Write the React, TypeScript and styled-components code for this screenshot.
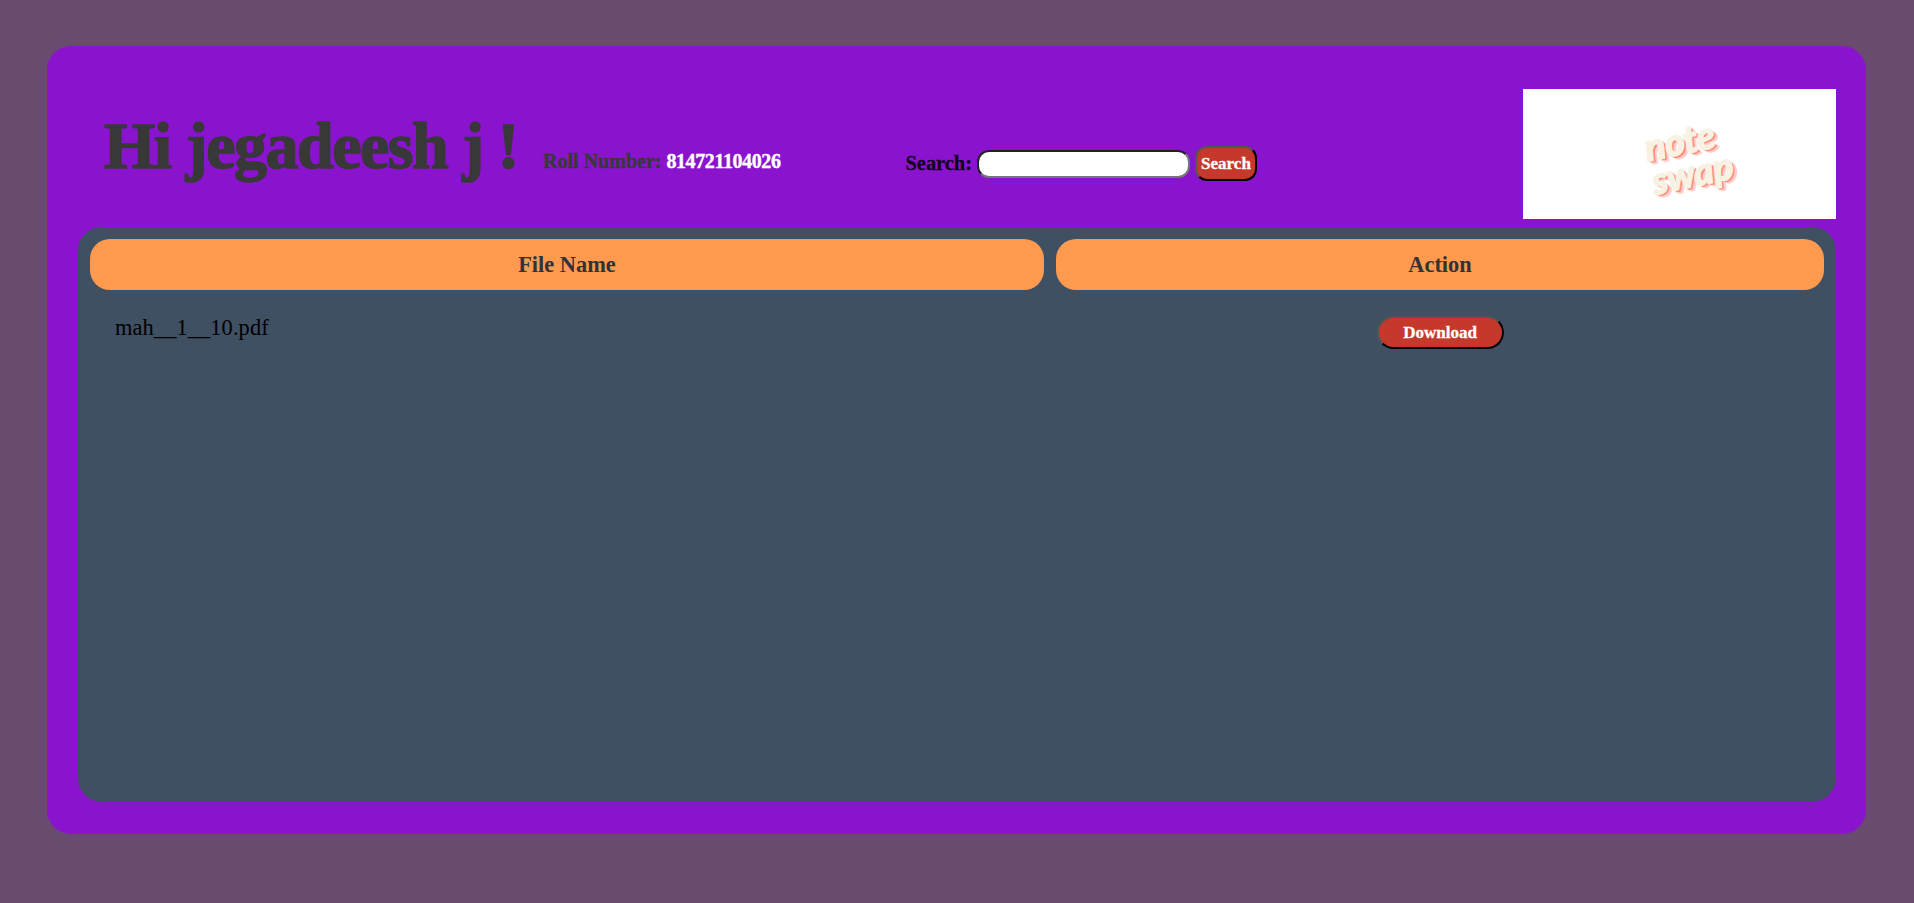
import React from 'react'
import styled, { createGlobalStyle } from 'styled-components'

const GlobalStyle = createGlobalStyle`
  html, body { margin: 0; height: 100%; }
  body {
    background-color: #694b70;
    font-family: "Liberation Serif", "Times New Roman", serif;
  }
`

const App = () => (
  <>
    <GlobalStyle/>
    <Page>
      <Card>
        <Header>
          <Greeting>
            <Title>Hi jegadeesh j !</Title>
            <Roll>Roll Number: <RollValue>814721104026</RollValue></Roll>
          </Greeting>
          <SearchForm>
            <SearchLabel htmlFor='search'>Search:</SearchLabel>
            <SearchInput id='search' type='text'/>
            <Button $small type='button'>Search</Button>
          </SearchForm>
          <Logo>
            <LogoText>
              <span>note</span>
              <SecondLine>swap</SecondLine>
            </LogoText>
          </Logo>
        </Header>
        <Panel>
          <Table>
            <thead>
              <tr>
                <Th $width='954px'>File Name</Th>
                <Th>Action</Th>
              </tr>
            </thead>
            <tbody>
              <tr>
                <FileCell>mah__1__10.pdf</FileCell>
                <ActionCell><Button type='button'>Download</Button></ActionCell>
              </tr>
            </tbody>
          </Table>
        </Panel>
      </Card>
    </Page>
  </>
)

const Page = styled.div`
  box-sizing: border-box;
  height: 903px;
  padding: 46px 48px 69px 47px;
`

const Card = styled.div`
  box-sizing: border-box;
  height: 100%;
  display: flex;
  flex-direction: column;
  padding: 43px 30px 32px 31px;
  background-color: #8a14ce;
  border-radius: 24px;
`

const Header = styled.div`
  height: 130px;
  margin-bottom: 8px;
  display: flex;
  align-items: flex-start;
`

const Greeting = styled.div`
  display: flex;
  align-items: baseline;
  gap: 25px;
  padding: 17px 0 0 26px;
`

const Title = styled.h1`
  margin: 0;
  font-size: 66px;
  line-height: 79px;
  font-weight: 700;
  letter-spacing: -1.5px;
  color: #383838;
  -webkit-text-stroke: 1.5px #383838;
  white-space: nowrap;
`

const Roll = styled.span`
  font-size: 20px;
  font-weight: 700;
  color: #383838;
  -webkit-text-stroke: 0.4px #383838;
  white-space: nowrap;
`

const RollValue = styled.span`
  color: #ffffff;
  letter-spacing: -0.4px;
  -webkit-text-stroke: 0.4px #ffffff;
`

const SearchForm = styled.form`
  display: flex;
  align-items: center;
  margin: 57px 0 0 125px;
`

const SearchLabel = styled.label`
  font-size: 20.4px;
  font-weight: 700;
  color: #14001f;
  -webkit-text-stroke: 0.3px #14001f;
  margin-right: 5px;
`

const SearchInput = styled.input`
  box-sizing: border-box;
  width: 213px;
  height: 28px;
  margin: 0 5px 0 0;
  padding: 1px 2px;
  background: #ffffff;
  border: 2px inset #767676;
  border-radius: 12px;
`

const Button = styled.button<{ $small?: boolean }>`
  box-sizing: border-box;
  height: ${p => (p.$small ? '35px' : '33px')};
  width: ${p => (p.$small ? '62px' : '127px')};
  padding: 0;
  background-color: #c4392b;
  color: #ffffff;
  font-family: inherit;
  font-size: 17px;
  font-weight: 700;
  -webkit-text-stroke: 0.3px #ffffff;
  border: 2px outset #000000;
  border-radius: ${p => (p.$small ? '12px' : '17px')};
`

const Logo = styled.div`
  width: 313px;
  height: 130px;
  margin-left: auto;
  display: flex;
  align-items: center;
  justify-content: center;
  background-color: #ffffff;
  overflow: hidden;
`

const LogoText = styled.div`
  display: flex;
  flex-direction: column;
  align-items: center;
  padding: 6px 0 0 5px;
  font-family: "Lato", sans-serif;
  font-size: 38px;
  font-style: italic;
  font-weight: 900;
  line-height: 34px;
  letter-spacing: -0.5px;
  color: #f7f2e4;
  -webkit-text-stroke: 1.2px #f7f2e4;
  text-shadow: 2px 2px 0 #ff8f80, 4px 4px 0 #ffd0c8;
  transform: rotate(-12deg);
`

const SecondLine = styled.span`
  margin-left: 12px;
`

const Panel = styled.div`
  flex: 1;
  background-color: #3f5062;
  border-radius: 24px;
`

const Table = styled.table`
  width: 100%;
  border-spacing: 12px;
  table-layout: fixed;
`

const Th = styled.th<{ $width?: string }>`
  width: ${p => p.$width || 'auto'};
  height: 51px;
  padding: 0;
  background-color: #ff9a4f;
  border-radius: 20px;
  font-size: 22.4px;
  font-weight: 700;
  color: #333333;
`

const FileCell = styled.td`
  padding: 13px 25px;
  font-size: 22.4px;
  letter-spacing: 0.1px;
  color: #000000;
  vertical-align: top;
`

const ActionCell = styled.td`
  padding: 14px 0;
  text-align: center;
  vertical-align: top;
`

export default App
